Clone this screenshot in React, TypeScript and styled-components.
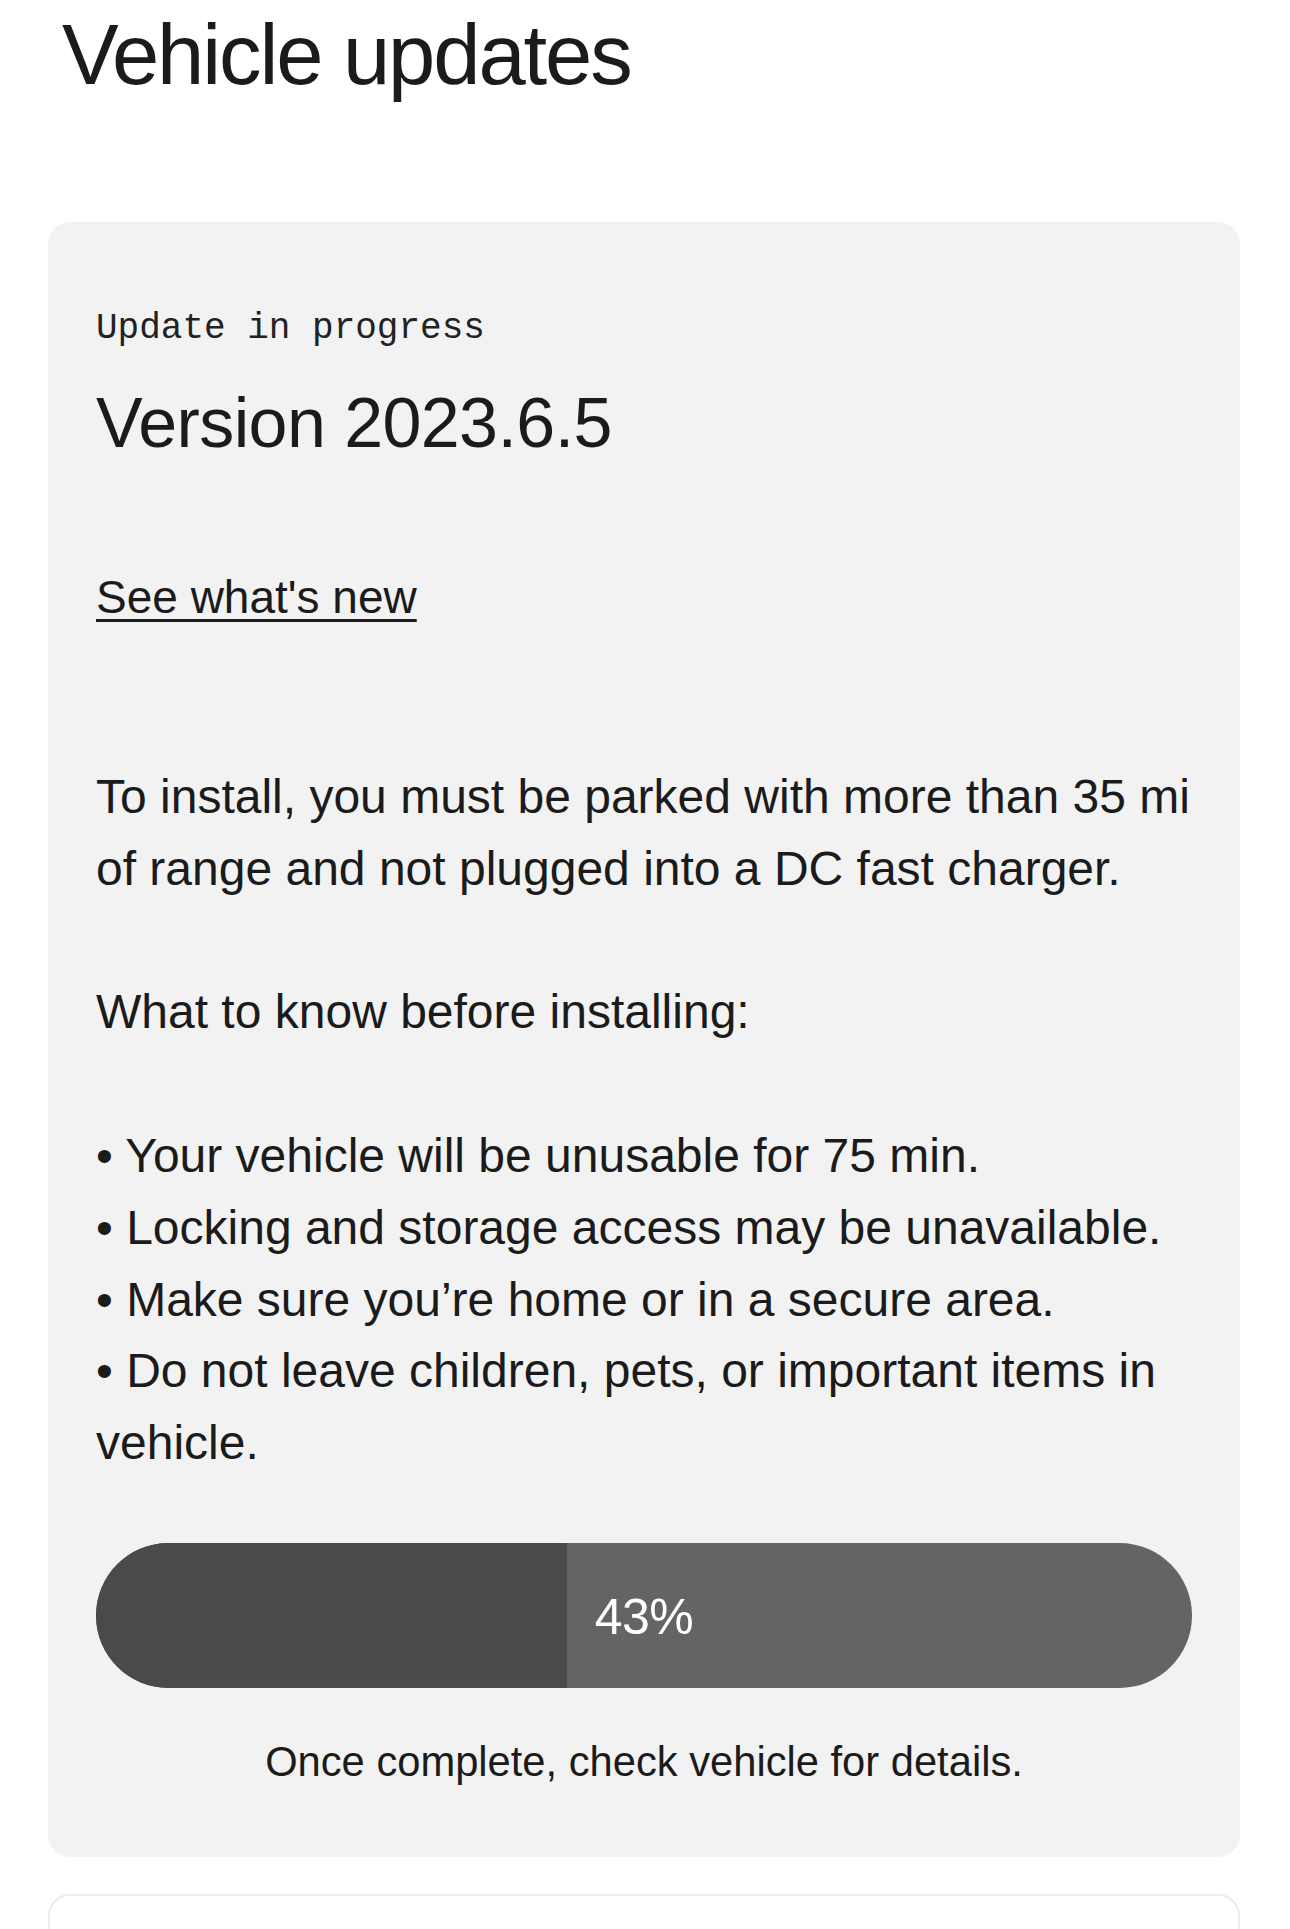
import React from "react";
import styled, { createGlobalStyle } from "styled-components";

const GlobalStyle = createGlobalStyle`
  html, body {
    margin: 0;
    padding: 0;
    background: #ffffff;
  }
  body {
    font-family: "Liberation Sans", Arial, sans-serif;
    color: #1b1b1b;
  }
`;

const Page = styled.div`
  display: flex;
  flex-direction: column;
  padding: 12px 50px 0 48px;
  height: 1929px;
  box-sizing: border-box;
  overflow: hidden;
`;

const Title = styled.h1`
  margin: 0 0 125px 14px;
  font-size: 85px;
  line-height: 85px;
  font-weight: 400;
  letter-spacing: -2.1px;
  color: #1b1b1b;
`;

const Card = styled.section`
  background: #f2f2f2;
  border-radius: 22px;
  padding: 85px 48px 70px 48px;
  display: flex;
  flex-direction: column;
`;

const StatusLabel = styled.div`
  font-family: "Liberation Mono", "Courier New", monospace;
  font-size: 36px;
  line-height: 44px;
  color: #222;
`;

const VersionTitle = styled.h2`
  margin: 30px 0 0 0;
  font-size: 70px;
  line-height: 84px;
  font-weight: 400;
  letter-spacing: -0.6px;
  color: #1b1b1b;
`;

const NewsLink = styled.a`
  align-self: flex-start;
  margin-top: 104px;
  font-size: 46px;
  line-height: 56px;
  color: #1b1b1b;
  text-decoration: underline;
  text-decoration-thickness: 3px;
  text-underline-offset: 6px;
`;

const BodyText = styled.div`
  margin-top: 136px;
  display: flex;
  flex-direction: column;
  gap: 71.8px;
  font-size: 48px;
  line-height: 71.8px;
  color: #1b1b1b;
`;

const Paragraph = styled.p`
  margin: 0;
`;

const Line = styled.span`
  display: block;
`;

const Progress = styled.div`
  margin-top: 64px;
  position: relative;
  height: 145px;
  border-radius: 73px;
  background: #646464;
  overflow: hidden;
  display: flex;
  align-items: center;
  justify-content: center;
`;

const ProgressFill = styled.div`
  position: absolute;
  left: 0;
  top: 0;
  bottom: 0;
  background: #4a4a4a;
`;

const ProgressLabel = styled.span`
  position: relative;
  font-size: 50px;
  line-height: 1;
  color: #ffffff;
  margin-top: 4px;
  letter-spacing: -0.5px;
`;

const Note = styled.p`
  margin: 49px 0 0 0;
  text-align: center;
  font-size: 41.7px;
  line-height: 50px;
  color: #1b1b1b;
`;

const NextCard = styled.section`
  margin-top: 37px;
  height: 200px;
  border: 2px solid #ececec;
  border-radius: 22px;
  background: #ffffff;
  flex-shrink: 0;
`;

export default function App() {
  const percent = 43;
  return (
    <>
      <GlobalStyle />
      <Page>
        <Title>Vehicle updates</Title>
        <Card>
          <StatusLabel>Update in progress</StatusLabel>
          <VersionTitle>Version 2023.6.5</VersionTitle>
          <NewsLink href="#">See what's new</NewsLink>
          <BodyText>
            <Paragraph>
              To install, you must be parked with more than 35 mi of range and
              not plugged into a DC fast charger.
            </Paragraph>
            <Paragraph>What to know before installing:</Paragraph>
            <Paragraph>
              <Line>• Your vehicle will be unusable for 75 min.</Line>
              <Line>• Locking and storage access may be unavailable.</Line>
              <Line>• Make sure you’re home or in a secure area.</Line>
              <Line>
                • Do not leave children, pets, or important items in vehicle.
              </Line>
            </Paragraph>
          </BodyText>
          <Progress>
            <ProgressFill style={{ width: `${percent}%` }} />
            <ProgressLabel>{percent}%</ProgressLabel>
          </Progress>
          <Note>Once complete, check vehicle for details.</Note>
        </Card>
        <NextCard />
      </Page>
    </>
  );
}
